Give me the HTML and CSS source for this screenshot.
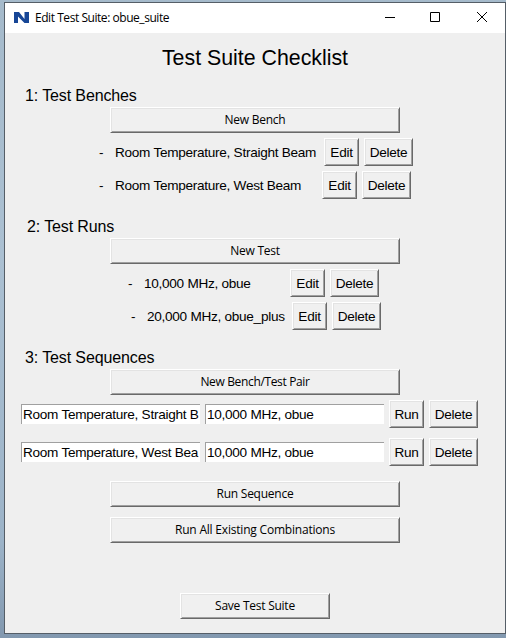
FILE: index.html
```html
<!DOCTYPE html>
<html lang="en">
<head>
<meta charset="utf-8">
<title>Edit Test Suite: obue_suite</title>
<link rel="stylesheet" href="styles.css">
</head>
<body>
<div class="window">
  <header class="titlebar">
    <svg class="logo" width="15" height="12" viewBox="0 0 15 12"><path d="M0 0H5L10.500 7V0H15V11H10.500L4 4.500V11H0Z" fill="#174696"/></svg>
    <span class="caption">Edit Test Suite: obue_suite</span>
    <div class="controls">
      <svg width="46" height="30" viewBox="0 0 46 30" fill="none" stroke="#000"><path d="M18 14.500H28"/></svg>
      <svg width="46" height="30" viewBox="0 0 46 30" fill="none" stroke="#000"><path d="M17.500 9.500H26.500V18.500H17.500Z"/></svg>
      <svg width="46" height="30" viewBox="0 0 46 30" fill="none" stroke="#000"><path d="M18 9L28 19M28 9L18 19"/></svg>
    </div>
  </header>
  <main>
    <h1><span>Test Suite Checklist</span></h1>

    <section class="benches">
      <h2>1: Test Benches</h2>
      <button class="wide">New Bench</button>
      <div class="item first-bench"><span class="dash">-</span><span class="name">Room Temperature, Straight Beam</span><button class="small">Edit</button><button class="small delete">Delete</button></div>
      <div class="item second-bench"><span class="dash">-</span><span class="name">Room Temperature, West Beam</span><button class="small">Edit</button><button class="small delete">Delete</button></div>
    </section>

    <section class="runs">
      <h2>2: Test Runs</h2>
      <button class="wide">New Test</button>
      <div class="item first-run"><span class="dash">-</span><span class="name">10,000 MHz, obue</span><button class="small">Edit</button><button class="small delete">Delete</button></div>
      <div class="item second-run"><span class="dash">-</span><span class="name">20,000 MHz, obue_plus</span><button class="small">Edit</button><button class="small delete">Delete</button></div>
    </section>

    <section class="sequences">
      <h2>3: Test Sequences</h2>
      <button class="wide pair-button">New Bench/Test Pair</button>
      <div class="pair"><div class="field">Room Temperature, Straight B</div><div class="field">10,000 MHz, obue</div><button class="small">Run</button><button class="small delete">Delete</button></div>
      <div class="pair"><div class="field">Room Temperature, West Bea</div><div class="field">10,000 MHz, obue</div><button class="small">Run</button><button class="small delete">Delete</button></div>
    </section>

    <button class="wide run-sequence">Run Sequence</button>
    <button class="wide run-all">Run All Existing Combinations</button>
    <button class="wide save">Save Test Suite</button>
  </main>
</div>
</body>
</html>
```
FILE: styles.css
```css
* { box-sizing: border-box; }
body {
  margin: 0;
  width: 506px;
  height: 638px;
  padding: 2px 0 4px 4px;
  overflow: hidden;
  background: linear-gradient(#a5bacb, #abc0d2 40%, #9cb3c8 85%, #8298af);
  font-family: "Liberation Sans", Arial, sans-serif;
  color: #000;
}
.window {
  width: 502px;
  height: 632px;
  border: 1px solid #555e67;
  background: #efefef;
}
.titlebar {
  display: flex;
  align-items: center;
  height: 30px;
  padding-left: 9px;
  background: #fff;
}
.logo { margin-top: -1px; }
.caption {
  margin: 0 0 0 6px;
  font: 12px/18px "Open Sans", "Noto Sans", sans-serif;
  letter-spacing: -.45px;
  white-space: nowrap;
}
.controls { display: flex; margin-left: auto; }
main { height: 600px; }
h1 {
  height: 50px;
  margin: 0;
  padding: 12px 0 0;
  text-align: center;
  font-size: 21.33px;
  font-weight: 400;
  line-height: 26px;
}
h2 {
  height: 24px;
  margin: 0;
  padding: 3px 0 0 20px;
  font-size: 16px;
  font-weight: 400;
  line-height: 20px;
  letter-spacing: -.12px;
}
button {
  display: block;
  padding: 0;
  border: 1px solid;
  border-color: #fff #696969 #696969 #fff;
  box-shadow: inset 1px 1px #e3e3e3, inset -1px -1px #a0a0a0;
  background: #f0f0f0;
  color: #000;
}
.wide {
  width: 290px;
  height: 26px;
  margin-left: 105px;
  font: 12px/22px "Open Sans", "Noto Sans", sans-serif;
  letter-spacing: -.25px;
}
.pair-button { letter-spacing: -.35px; }
.small {
  flex: none;
  width: 35px;
  height: 28px;
  padding-top: 1px;
  font: 13.6px/24px "Liberation Sans", Arial, sans-serif;
  letter-spacing: -.28px;
}
.delete { width: 49px; margin-left: 5px; }
.item {
  display: flex;
  margin-top: 5px;
  font-size: 13.6px;
  letter-spacing: -.28px;
  line-height: 30px;
  height: 28px;
  white-space: pre;
}
.dash { width: 16px; }
.first-bench { padding-left: 94px; }
.first-bench .name { width: 209px; }
.second-bench { padding-left: 94px; }
.second-bench .name { width: 207px; }
.benches, .runs { height: 131px; }
.runs h2 { padding-left: 22px; }
.first-run { padding-left: 123px; }
.first-run .name { width: 146px; }
.second-run { padding-left: 126px; }
.second-run .name { width: 145px; }
.sequences { height: 136px; }
.pair {
  display: flex;
  align-items: center;
  gap: 5px;
  height: 28px;
  margin: 5px 0 10px 16px;
}
.pair + .pair { margin-top: 0; }
.pair .delete { margin-left: 0; }
.field {
  width: 179px;
  height: 20px;
  padding: 0 0 0 1px;
  overflow: hidden;
  border: solid #a0a0a0;
  border-width: 1px 0 0 1px;
  background: #fff;
  font-size: 13.6px;
  letter-spacing: -.28px;
  line-height: 20px;
  white-space: nowrap;
}
.run-all { margin-top: 10px; letter-spacing: -.2px; }
.save { width: 150px; margin: 50px 0 0 175px; }
```
